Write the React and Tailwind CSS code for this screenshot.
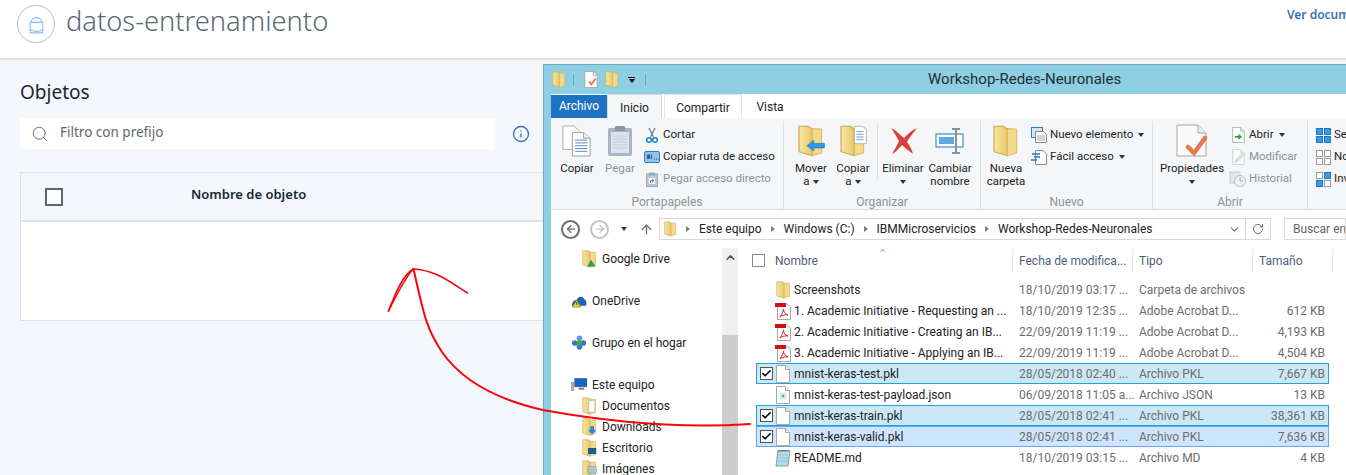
import { Search, Info, ChevronDown, ChevronUp, ArrowLeft, ArrowRight, ArrowUp, RotateCw, Check } from "lucide-react";

const files = [
  { name: "Screenshots", date: "18/10/2019 03:17 ...", type: "Carpeta de archivos", size: "", icon: "folder" },
  { name: "1. Academic Initiative - Requesting an ...", date: "18/10/2019 12:35 ...", type: "Adobe Acrobat D...", size: "612 KB", icon: "pdf" },
  { name: "2. Academic Initiative - Creating an IB...", date: "22/09/2019 11:19 ...", type: "Adobe Acrobat D...", size: "4,193 KB", icon: "pdf" },
  { name: "3. Academic Initiative - Applying an IB...", date: "22/09/2019 11:19 ...", type: "Adobe Acrobat D...", size: "4,504 KB", icon: "pdf" },
  { name: "mnist-keras-test.pkl", date: "28/05/2018 02:40 ...", type: "Archivo PKL", size: "7,667 KB", icon: "file", selected: "sel" },
  { name: "mnist-keras-test-payload.json", date: "06/09/2018 11:05 a...", type: "Archivo JSON", size: "13 KB", icon: "json" },
  { name: "mnist-keras-train.pkl", date: "28/05/2018 02:41 ...", type: "Archivo PKL", size: "38,361 KB", icon: "file", selected: "sel" },
  { name: "mnist-keras-valid.pkl", date: "28/05/2018 02:41 ...", type: "Archivo PKL", size: "7,636 KB", icon: "file", selected: "focus" },
  { name: "README.md", date: "18/10/2019 03:15 ...", type: "Archivo MD", size: "4 KB", icon: "note" },
];

function Folder({ className = "w-[15px] h-[18px]", badge }) {
  return (
    <svg viewBox="0 0 20 24" className={className}>
      <path d="M7 2 L18 3 V21 L7 22Z" fill="#e3bd5c" />
      <path d="M1 1 H8 L11 3 V23 L1 20Z" fill="url(#folderFront)" stroke="#c9a548" strokeWidth="0.8" />
      <path d="M11 3 L18 3 V21 L11 23Z" fill="#f2d98b" stroke="#d4b45a" strokeWidth="0.6" />
      {badge}
    </svg>
  );
}

function PageIcon({ className = "w-[14px] h-[18px]", children }) {
  return (
    <svg viewBox="0 0 14 18" className={className}>
      <path d="M.5.5H9.5L13.5 4.5V17.5H.5Z" fill="#fff" stroke="#a9a9a9" />
      <path d="M9.5.5V4.5H13.5" fill="#eee" stroke="#a9a9a9" />
      {children}
    </svg>
  );
}

function PdfIcon() {
  return (
    <svg viewBox="0 0 16 18" className="w-[16px] h-[18px]">
      <path d="M2.5 1.5H11L15.5 5V17.5H2.5Z" fill="#fff" stroke="#a9a9a9" />
      <path d="M0 1H11V5H0Z" fill="#cf1016" />
      <path d="M5 15C7 12 8.500 9 8.500 7C8.500 10 10 12 13 13C10 12.500 7.500 13 5 15Z" fill="none" stroke="#d4262c" />
    </svg>
  );
}

function FileIcon({ kind }) {
  if (kind === "folder") return <Folder />;
  if (kind === "pdf") return <PdfIcon />;
  if (kind === "json")
    return (
      <PageIcon>
        <rect x="4" y="7" width="6" height="6" fill="#e9f5e9" stroke="#bcd6bc" strokeWidth="0.6" />
        <path d="M7 8.500V11.500M5.500 10H8.500" stroke="#25a244" />
      </PageIcon>
    );
  if (kind === "note")
    return (
      <svg viewBox="0 0 16 18" className="w-[16px] h-[18px]">
        <path d="M3 1.500H15L13 17H1Z" fill="#b5d8ea" stroke="#7ba4ba" />
        <path d="M3 1V3M5 1V3M7 1V3M9 1V3M11 1V3M13 1V3" stroke="#555" strokeWidth="0.7" />
        <path d="M3 6H13M3 9H13M2.500 12H12.500" stroke="#8fbdd3" strokeWidth="0.7" />
      </svg>
    );
  return <PageIcon />;
}

function Caret({ className = "" }) {
  return <span className={`inline-block w-0 h-0 border-x-[3.5px] border-x-transparent border-t-[4px] border-t-[#333] ${className}`} />;
}

function CopyDocs() {
  return (
    <svg viewBox="0 0 32 34" className="w-[30px] h-[32px]">
      <path d="M1 1H13L19 7V26H1Z" fill="#fdfdfd" stroke="#aaa" />
      <path d="M11 8H23L30 14V33H11Z" fill="#fff" stroke="#999" />
      <path d="M23 8V14H30" fill="#eee" stroke="#999" />
      <path d="M14 16H27M14 19H27M14 22H27M14 25H27M14 28H27" stroke="#4a86c5" />
    </svg>
  );
}

function PasteBoard() {
  return (
    <svg viewBox="0 0 26 32" className="w-[26px] h-[32px]">
      <rect x="1" y="3" width="24" height="28" rx="2" fill="#a7b3c6" />
      <rect x="4" y="7" width="18" height="21" fill="#dde3ec" />
      <path d="M6 11H20M6 14H20M6 17H20M6 20H20M6 23H20" stroke="#c2cddb" />
      <rect x="8" y="1" width="10" height="5" rx="1" fill="#8b97aa" />
    </svg>
  );
}

function Scissors() {
  return (
    <svg viewBox="0 0 14 16" className="w-[14px] h-[16px]">
      <path d="M4 1L8.500 10M10 1L5.500 10" stroke="#7d8794" strokeWidth="1.500" />
      <circle cx="4" cy="13" r="2.300" fill="none" stroke="#1d7fd0" strokeWidth="1.500" />
      <circle cx="10" cy="13" r="2.300" fill="none" stroke="#1d7fd0" strokeWidth="1.500" />
    </svg>
  );
}

function PathIcon() {
  return (
    <svg viewBox="0 0 16 12" className="w-[16px] h-[12px]">
      <rect x=".5" y=".5" width="15" height="11" rx="1.500" fill="#8fc3f2" stroke="#2f7fc6" />
      <path d="M3 3.500L4 8L5 3.500L6 8M7.500 3.500V8" stroke="#1c3550" strokeWidth="0.8" fill="none" />
      <path d="M10 8H10.800M12 8H12.800M14 8H14.500" stroke="#1c3550" />
    </svg>
  );
}

function ShortcutIcon() {
  return (
    <svg viewBox="0 0 12 15" className="w-[12px] h-[15px]">
      <rect x=".5" y="2" width="11" height="12.500" fill="#bcc8d6" stroke="#9aa8b8" />
      <rect x="3" y=".5" width="6" height="3" fill="#9aa8b8" />
      <rect x="3" y="6" width="6" height="6" fill="#fff" />
      <path d="M4.500 11V8.500H7.500M6 7L8 8.500L6 10" stroke="#5d84ad" fill="none" />
    </svg>
  );
}

function MoveIcon() {
  return (
    <Folder
      className="w-[28px] h-[32px]"
      badge={<path d="M7 15.500L12 11.500V13.800H20V17.200H12V19.500Z" fill="#2c9be6" stroke="#1470b5" strokeWidth="0.5" />}
    />
  );
}

function CopyToIcon() {
  return (
    <Folder
      className="w-[28px] h-[32px]"
      badge={
        <g>
          <path d="M11 1H17L20 3V14H11Z" fill="#fff" stroke="#999" strokeWidth="0.5" />
          <path d="M12.500 5H18M12.500 7H18M12.500 9H18M12.500 11H18" stroke="#4a86c5" strokeWidth="0.6" />
        </g>
      }
    />
  );
}

function DeleteIcon() {
  return (
    <svg viewBox="0 0 30 30" className="w-[30px] h-[30px]">
      <path d="M3 2C8 4 12 9 16 12C20 8 24 4 29 2C25 7 21 12 19 16C22 20 24 24 25 28C21 25 17 22 14 19C11 22 8 26 4 28C6 24 9 20 11 15C8 10 6 6 3 2Z" fill="#d8413a" />
    </svg>
  );
}

function RenameIcon() {
  return (
    <svg viewBox="0 0 30 30" className="w-[30px] h-[30px]">
      <rect x="1" y="8" width="27" height="13" fill="#fff" stroke="#1a78c8" />
      <rect x="4" y="11" width="15" height="7" fill="#5fa8e0" />
      <path d="M17 3H25M17 27H25M21 3V27" stroke="#8f8f8f" strokeWidth="2" />
    </svg>
  );
}

function NewItemIcon() {
  return (
    <svg viewBox="0 0 16 16" className="w-[16px] h-[16px]">
      <rect x=".5" y=".5" width="11" height="10" fill="#cfe6fb" stroke="#2f7fc6" />
      <path d="M4.500 4.500H12.500L15.500 7.500V15.500H4.500Z" fill="#fff" stroke="#888" />
      <path d="M6 9H14M6 11H14M6 13H14" stroke="#aaa" />
    </svg>
  );
}

function EasyAccessIcon() {
  return (
    <svg viewBox="0 0 16 16" className="w-[16px] h-[16px]">
      <path d="M4.500 1.500H12L15.500 5V15.500H4.500Z" fill="#fff" stroke="#888" />
      <path d="M1 5H9M3 8H9M0 11H6" stroke="#1a78c8" strokeWidth="1.300" />
    </svg>
  );
}

function PropsIcon() {
  return (
    <svg viewBox="0 0 32 34" className="w-[32px] h-[34px]">
      <path d="M1 1H22L30 9V32H1Z" fill="#fafafa" stroke="#a5a5a5" />
      <path d="M22 1V9H30" fill="#eee" stroke="#a5a5a5" />
      <path d="M12 23L18 29L29 14" fill="none" stroke="#e8784a" strokeWidth="4.500" strokeLinecap="round" />
    </svg>
  );
}

function OpenIcon() {
  return (
    <PageIcon className="w-[13px] h-[16px]">
      <path d="M3 10H7V7.500L11 11L7 14.500V12H3Z" fill="#1fa836" />
    </PageIcon>
  );
}

function EditIcon() {
  return (
    <PageIcon className="w-[13px] h-[16px] opacity-50">
      <path d="M3 15L5 11L11 5L13 7L7 13Z" fill="#bcd4ea" stroke="#6d97bd" strokeWidth="0.7" />
    </PageIcon>
  );
}

function HistoryIcon() {
  return (
    <svg viewBox="0 0 18 16" className="w-[18px] h-[16px] opacity-60">
      <rect x="1" y="1" width="10" height="11" fill="#d3dce6" stroke="#aab6c3" />
      <circle cx="11" cy="10" r="5.500" fill="#eef1f4" stroke="#8e98a3" />
      <path d="M11 6.500V10H14" stroke="#666" fill="none" />
    </svg>
  );
}

function GridIcon({ filled }) {
  return (
    <svg viewBox="0 0 15 15" className="w-[15px] h-[15px]">
      {[[0, 0], [8, 0], [0, 8], [8, 8]].map(([x, y], i) => {
        const on = filled === "all" || (filled === "alt" && (i === 1 || i === 2));
        return <rect key={i} x={x + 0.5} y={y + 0.5} width="6" height="6" fill={on ? "#3b99e8" : "#fff"} stroke={on ? "#1a78c8" : "#9a9a9a"} />;
      })}
    </svg>
  );
}

function BigButton({ icon, lines, muted, caret, className = "" }) {
  return (
    <div className={`flex flex-col items-center shrink-0 ${muted ? "text-[#8d9299]" : "text-[#222]"} ${className}`}>
      <div className="h-[40px] flex items-center justify-center">{icon}</div>
      <div className="h-[13px] leading-[13px] mt-[1px] whitespace-nowrap">{lines[0]}</div>
      {lines[1] || caret ? (
        <div className="h-[13px] leading-[13px] whitespace-nowrap flex items-center gap-[3px] justify-center">
          {lines[1]}
          {caret && <Caret />}
        </div>
      ) : null}
    </div>
  );
}

function SmallButton({ icon, label, muted, caret, iconWidth = "w-[18px]" }) {
  return (
    <div className={`h-[22px] flex items-center whitespace-nowrap ${muted ? "text-[#8d9299]" : "text-[#222]"}`}>
      <span className={`${iconWidth} flex justify-center shrink-0`}>{icon}</span>
      <span className="ml-[2px]">{label}</span>
      {caret && <Caret className="ml-[5px]" />}
    </div>
  );
}

function RibbonGroup({ label, width, children }) {
  return (
    <div className={`${width} shrink-0 h-full flex flex-col border-r border-[#dcdee0]`}>
      <div className="h-[73px] flex">{children}</div>
      <div className="text-center text-[12px] text-[#8d9299] leading-[14px] mt-[2px]">{label}</div>
    </div>
  );
}

function Ribbon() {
  return (
    <div className="h-[92px] bg-[#f5f6f7] border-b border-[#dadbdc] flex pt-[3px] overflow-hidden text-[11.5px]">
      <RibbonGroup label="Portapapeles" width="w-[233px]">
        <BigButton className="w-[38px] ml-[7px] mr-[4px]" icon={<CopyDocs />} lines={["Copiar"]} />
        <BigButton className="w-[38px] ml-[1px]" muted icon={<PasteBoard />} lines={["Pegar"]} />
        <div className="ml-[4px] pt-[3px]">
          <SmallButton icon={<Scissors />} label="Cortar" />
          <SmallButton icon={<PathIcon />} label="Copiar ruta de acceso" />
          <SmallButton muted icon={<ShortcutIcon />} label="Pegar acceso directo" />
        </div>
      </RibbonGroup>
      <RibbonGroup label="Organizar" width="w-[197px]">
        <BigButton className="w-[42px] ml-[6px]" icon={<MoveIcon />} lines={["Mover", "a"]} caret />
        <BigButton className="w-[42px]" icon={<CopyToIcon />} lines={["Copiar", "a"]} caret />
        <div className="w-px h-[55px] bg-[#dcdee0] mt-[3px] mx-[3px]" />
        <BigButton className="w-[44px]" icon={<DeleteIcon />} lines={["Eliminar"]} caret />
        <BigButton className="w-[48px] ml-[1px]" icon={<RenameIcon />} lines={["Cambiar", "nombre"]} />
      </RibbonGroup>
      <RibbonGroup label="Nuevo" width="w-[172px]">
        <BigButton className="w-[44px] ml-[3px]" icon={<Folder className="w-[28px] h-[32px]" />} lines={["Nueva", "carpeta"]} />
        <div className="pt-[3px] ml-[2px]">
          <SmallButton icon={<NewItemIcon />} label="Nuevo elemento" caret />
          <SmallButton icon={<EasyAccessIcon />} label="Fácil acceso" caret />
        </div>
      </RibbonGroup>
      <RibbonGroup label="Abrir" width="w-[155px]">
        <BigButton className="w-[66px] ml-[6px] mr-[4px]" icon={<PropsIcon />} lines={["Propiedades"]} caret />
        <div className="pt-[3px]">
          <SmallButton icon={<OpenIcon />} label="Abrir" caret />
          <SmallButton muted icon={<EditIcon />} label="Modificar" />
          <SmallButton muted icon={<HistoryIcon />} label="Historial" />
        </div>
      </RibbonGroup>
      <div className="pl-[6px] pt-[3px] shrink-0">
        <SmallButton icon={<GridIcon filled="all" />} label="Seleccionar todo" />
        <SmallButton icon={<GridIcon />} label="No seleccionar ninguno" />
        <SmallButton icon={<GridIcon filled="alt" />} label="Invertir selección" />
      </div>
    </div>
  );
}

function AddressBar() {
  return (
    <div className="h-[38px] flex items-center text-[#222]">
      <span className="ml-[10px] w-[19px] h-[19px] rounded-full border-2 border-[#6d6d6d] flex items-center justify-center">
        <ArrowLeft size={12} strokeWidth={2.5} className="text-[#6d6d6d]" />
      </span>
      <span className="ml-[10px] w-[19px] h-[19px] rounded-full border-2 border-[#c4c4c4] flex items-center justify-center">
        <ArrowRight size={12} strokeWidth={2.5} className="text-[#c4c4c4]" />
      </span>
      <Caret className="ml-[12px] border-t-[#8a8a8a]" />
      <ArrowUp size={15} strokeWidth={2} className="ml-[12px] text-[#6d6d6d]" />
      <div className="ml-[5px] w-[612px] h-[22px] border border-[#d9d9d9] flex items-center bg-white shrink-0">
        <span className="ml-[4px]"><Folder className="w-[13px] h-[16px]" /></span>
        {["Este equipo", "Windows (C:)", "IBMMicroservicios", "Workshop-Redes-Neuronales"].map((part) => (
          <span key={part} className="flex items-center">
            <span className="mx-[9px] w-0 h-0 border-y-[3.5px] border-y-transparent border-l-[4px] border-l-[#7d7d7d]" />
            <span className="whitespace-nowrap">{part}</span>
          </span>
        ))}
        <ChevronDown size={13} className="ml-auto mr-[4px] text-[#6d6d6d]" />
        <span className="w-[25px] h-full border-l border-[#d9d9d9] flex items-center justify-center">
          <RotateCw size={12} className="text-[#6d6d6d]" />
        </span>
      </div>
      <div className="ml-[13px] flex-1 h-[22px] border border-[#d9d9d9] pl-[8px] leading-[20px] text-[#666] whitespace-nowrap overflow-hidden bg-white">
        Buscar en Workshop-Redes-Neuronales
      </div>
    </div>
  );
}

function NavItem({ icon, label, indent }) {
  return (
    <div className={`h-[21px] flex items-center ${indent ? "pl-[30px]" : "pl-[20px]"}`}>
      <span className="w-[16px] flex justify-center shrink-0">{icon}</span>
      <span className="ml-[5px] whitespace-nowrap">{label}</span>
    </div>
  );
}

function NavPane() {
  const cloud = (
    <svg viewBox="0 0 17 15" className="w-[17px] h-[15px]">
      <path d="M1 13C1 9 3 7 6 7C7 3 12 2 14 6C16 7 17 9 16 13Z" fill="#1766b8" />
      <path d="M6 7L10.500 14.500H1.500Z" fill="#f6cf2b" stroke="#7a6410" strokeWidth="0.6" />
      <path d="M6 9.500V12" stroke="#222" />
    </svg>
  );
  const group = (
    <svg viewBox="0 0 17 17" className="w-[17px] h-[17px]">
      <circle cx="4" cy="9" r="3" fill="#3a73c4" />
      <circle cx="13" cy="9" r="3" fill="#3a73c4" />
      <circle cx="9" cy="4" r="3" fill="#5a9ae0" />
      <circle cx="9" cy="13" r="3" fill="#3a73c4" />
      <circle cx="9" cy="9" r="3" fill="#3fae49" />
    </svg>
  );
  const pc = (
    <svg viewBox="0 0 17 15" className="w-[17px] h-[15px]">
      <rect x="0" y="5" width="3" height="9" fill="#b9bec4" stroke="#666" strokeWidth="0.5" />
      <rect x="4" y="1" width="13" height="9" fill="#1466cf" stroke="#555" strokeWidth="0.6" />
      <path d="M8 13H14V11H8Z" fill="#777" />
    </svg>
  );
  return (
    <div className="w-[171px] shrink-0 relative">
      <NavItem indent icon={<Folder badge={<path d="M7 22L12 13L18 22Z" fill="#2c9c4e" />} />} label="Google Drive" />
      <div className="h-[21px]" />
      <NavItem icon={cloud} label="OneDrive" />
      <div className="h-[21px]" />
      <NavItem icon={group} label="Grupo en el hogar" />
      <div className="h-[21px]" />
      <NavItem icon={pc} label="Este equipo" />
      <NavItem indent icon={<Folder badge={<path d="M9 5H17V20H9Z" fill="#fff" stroke="#9ab" strokeWidth="0.6" />} />} label="Documentos" />
      <NavItem indent icon={<Folder badge={<path d="M11 11H16V16H19L13.500 22L8 16H11Z" fill="#2c86d8" />} />} label="Downloads" />
      <NavItem indent icon={<Folder badge={<rect x="8" y="12" width="11" height="8" fill="#24598f" />} />} label="Escritorio" />
      <NavItem indent icon={<Folder badge={<rect x="8" y="9" width="11" height="9" fill="#9dcbd6" stroke="#777" strokeWidth="0.5" />} />} label="Imágenes" />
    </div>
  );
}

function ColumnHead({ label, width }) {
  return (
    <div className={`${width} shrink-0 h-[22px] border-r border-[#e5eaf0] pl-[6px] leading-[22px] text-[#4c607a] whitespace-nowrap`}>
      {label}
    </div>
  );
}

function FileRow({ file }) {
  const rowStyle =
    file.selected === "sel"
      ? "bg-[#cbe8f6] border-[#26a0da]"
      : file.selected === "focus"
        ? "bg-[#cde5ff] border-[#66a7e8]"
        : "border-transparent";
  return (
    <div className={`h-[21px] flex items-center border text-[#6d6d6d] ${rowStyle}`}>
      <span className="w-[18px] shrink-0 flex justify-center">
        {file.selected && (
          <span className="w-[13px] h-[13px] bg-white border border-[#555] flex items-center justify-center">
            <Check size={11} strokeWidth={3.5} className="text-black" />
          </span>
        )}
      </span>
      <span className="w-[16px] shrink-0 flex justify-center">
        <FileIcon kind={file.icon} />
      </span>
      <span className="ml-[3px] w-[225px] shrink-0 text-[#222] whitespace-nowrap">{file.name}</span>
      <span className="w-[120px] shrink-0 whitespace-nowrap">{file.date}</span>
      <span className="w-[110px] shrink-0 whitespace-nowrap">{file.type}</span>
      <span className="w-[76px] shrink-0 text-right whitespace-nowrap">{file.size}</span>
    </div>
  );
}

function FilePane() {
  return (
    <div className="flex-1 min-w-0 pl-[14px]">
      <div className="flex items-center h-[21px] mt-[2px] relative">
        <span className="w-[13px] h-[13px] border border-[#8a8a8a] bg-white shrink-0" />
        <div className="ml-[5px] w-[243px] shrink-0 h-[22px] border-r border-[#e5eaf0] pl-[5px] leading-[22px] text-[#4c607a]">Nombre</div>
        <ColumnHead label="Fecha de modifica..." width="w-[120px]" />
        <ColumnHead label="Tipo" width="w-[120px]" />
        <ColumnHead label="Tamaño" width="w-[80px]" />
        <ChevronUp size={9} strokeWidth={3} className="absolute left-[126px] -top-[4px] text-[#9cc5e0]" />
      </div>
      <div className="mt-[8px] ml-[4px] w-[573px]">
        {files.map((file) => (
          <FileRow key={file.name} file={file} />
        ))}
      </div>
    </div>
  );
}

function ExplorerWindow() {
  return (
    <div className="absolute left-[543px] top-[64px] w-[803px] h-[411px] bg-[#8fcfe4] border-t border-l border-[#6fa9bd] overflow-hidden flex flex-col font-['Roboto',sans-serif] text-[12px]">
      <div className="h-[29px] shrink-0 flex items-center pl-[8px]">
        <Folder className="w-[14px] h-[17px]" />
        <span className="ml-[7px] w-px h-[12px] bg-[#6fa9bd]" />
        <span className="ml-[10px]"><PageIcon className="w-[14px] h-[17px]"><path d="M5 11L7.500 14L12 8" fill="none" stroke="#e8784a" strokeWidth="2" /></PageIcon></span>
        <span className="ml-[7px]"><Folder className="w-[14px] h-[17px]" /></span>
        <span className="ml-[9px] flex flex-col items-center gap-[1px]">
          <span className="w-[7px] h-px bg-black" />
          <Caret className="border-t-black" />
        </span>
        <span className="ml-[10px] w-px h-[12px] bg-[#6fa9bd]" />
        <span className="ml-[282px] text-[15px] text-[#1f2d33] whitespace-nowrap">Workshop-Redes-Neuronales</span>
      </div>
      <div className="ml-[7px] flex-1 min-h-0 bg-white flex flex-col">
        <div className="h-[24px] shrink-0 flex items-end">
          <div className="w-[56px] h-[23px] bg-[#1e72c4] text-white text-center leading-[22px]">Archivo</div>
          <div className="w-[55px] h-[24px] bg-[#f5f6f7] border-x border-t border-[#dadbdc] text-center leading-[26px] text-[#222] relative z-10">Inicio</div>
          <div className="ml-[2px] w-[78px] h-[24px] border-x border-t border-[#e8e8e8] text-center leading-[26px] text-[#222]">Compartir</div>
          <div className="w-[56px] h-[24px] text-center leading-[26px] text-[#222]">Vista</div>
        </div>
        <Ribbon />
        <AddressBar />
        <div className="flex-1 min-h-0 flex text-[#222]">
          <NavPane />
          <div className="w-[16px] shrink-0 bg-[#f0f0f0] flex flex-col items-center relative">
            <ChevronUp size={13} strokeWidth={3} className="mt-[3px] text-[#555]" />
            <div className="absolute left-0 right-0 top-[87px] bottom-0 bg-[#cdcdcd]" />
          </div>
          <FilePane />
        </div>
      </div>
    </div>
  );
}

function LockIcon() {
  return (
    <div className="w-[38px] h-[38px] rounded-full border border-[#b8c1c1] flex items-center justify-center">
      <svg viewBox="0 0 16 20" className="w-[17px] h-[21px]" fill="none" stroke="#8cbcf5" strokeWidth="1.100">
        <path d="M3 8C3 2 13 2 13 8" />
        <path d="M2 8H14V18H2Z" />
        <path d="M2 15C6 17 10 17 14 15" />
      </svg>
    </div>
  );
}

function RedArrow() {
  return (
    <svg className="absolute inset-0 pointer-events-none" width="1346" height="475" fill="none" stroke="#f5080c" strokeLinecap="round">
      <path d="M750 424C690 428 620 424 543 410C490 398 460 378 442 352C426 328 424 315 413.500 269" strokeWidth="2" />
      <path d="M413.500 269C435 270 450 282 467.500 293" strokeWidth="1.700" />
      <path d="M413.500 269C403 275 397 290 388.500 311" strokeWidth="1.800" />
      <path d="M413.500 269C408 274 398 292 388.500 311" strokeWidth="1.500" />
    </svg>
  );
}

export default function App() {
  return (
    <div className="relative w-[1346px] h-[475px] overflow-hidden bg-[#f4f7fb] font-['Noto_Sans',sans-serif]">
      <header className="h-[60px] bg-white border-b-2 border-[#dfe3e6] flex justify-between">
        <div className="flex items-start pl-[17px] pt-[5px]">
          <LockIcon />
          <h1 className="ml-[11px] -mt-[2px] text-[27.3px] leading-[36px] font-light text-[#5a6872]">datos-entrenamiento</h1>
        </div>
        <span className="w-[59px] overflow-hidden whitespace-nowrap pt-[6px] text-[12px] leading-[18px] font-semibold text-[#3d70b2]">
          Ver documentación
        </span>
      </header>
      <main className="pl-[20px] pt-[19px]">
        <h2 className="text-[19px] leading-[26px] text-[#152935]">Objetos</h2>
        <div className="mt-[13px] flex items-center">
          <div className="w-[475px] h-[31px] bg-white flex items-center pl-[11px]">
            <Search size={18} strokeWidth={1.2} className="text-[#5a6872]" />
            <span className="ml-[11px] -mt-[2px] text-[13.5px] text-[#5a6872]">Filtro con prefijo</span>
          </div>
          <Info size={18} strokeWidth={1.8} className="ml-[17px] text-[#3d70b2]" />
        </div>
        <div className="mt-[23px] w-[560px] border border-[#dfe3e6]">
          <div className="h-[49px] flex items-center border-b-2 border-[#dfe3e6] pl-[24px]">
            <span className="w-[18px] h-[18px] border-2 border-[#5a6872] bg-white" />
            <span className="ml-[128px] -mt-[4px] text-[13px] font-semibold text-[#152935]">Nombre de objeto</span>
          </div>
          <div className="h-[98px] bg-white" />
        </div>
      </main>
      <ExplorerWindow />
      <RedArrow />
      <svg className="absolute w-0 h-0">
        <defs>
          <linearGradient id="folderFront" x1="0" y1="0" x2="1" y2="0">
            <stop offset="0" stopColor="#f7e6a4" />
            <stop offset="1" stopColor="#e9c766" />
          </linearGradient>
        </defs>
      </svg>
    </div>
  );
}
